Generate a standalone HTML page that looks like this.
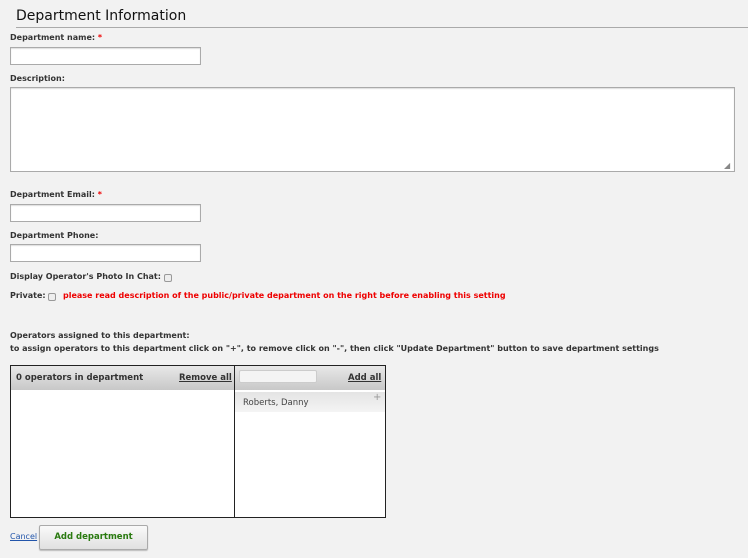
<!DOCTYPE html>
<html><head><style>
body{margin:0;width:748px;height:558px;background:#f2f2f2;font-family:"DejaVu Sans","Liberation Sans",sans-serif;position:relative;overflow:hidden;color:#333}
.a{position:absolute;white-space:nowrap}
.l{font-size:8px;font-weight:bold;color:#333}
.r{color:#e00}
.in{position:absolute;background:#fff;border:1px solid #aaa;box-shadow:inset 0 1px 1px #ddd;box-sizing:border-box}
.cb{position:absolute;width:8px;height:8px;border:1px solid #999;border-radius:2px;background:#eee;box-sizing:border-box}
</style></head><body>
<div class="a" style="left:16px;top:8px;font-size:14px;color:#111">Department Information</div>
<div class="a" style="left:16px;top:27px;width:732px;height:1px;background:#aaa"></div>
<div class="a l" style="left:10px;top:33px">Department name: <span class="r">*</span></div>
<div class="in" style="left:10px;top:47px;width:191px;height:18px"></div>
<div class="a l" style="left:10px;top:74px">Description:</div>
<div class="in" style="left:10px;top:87px;width:725px;height:85px"></div>
<div class="a" style="left:724px;top:161px;font-size:8px;color:#888">◢</div>
<div class="a l" style="left:10px;top:190px">Department Email: <span class="r">*</span></div>
<div class="in" style="left:10px;top:204px;width:191px;height:18px"></div>
<div class="a l" style="left:10px;top:231px">Department Phone:</div>
<div class="in" style="left:10px;top:244px;width:191px;height:18px"></div>
<div class="a l" style="left:10px;top:272px">Display Operator's Photo In Chat:</div>
<div class="cb" style="left:164px;top:274px"></div>
<div class="a l" style="left:10px;top:291px">Private:</div>
<div class="cb" style="left:48px;top:293px"></div>
<div class="a l r" style="left:63px;top:291px">please read description of the public/private department on the right before enabling this setting</div>
<div class="a l" style="left:10px;top:331px">Operators assigned to this department:</div>
<div class="a l" style="left:10px;top:344px">to assign operators to this department click on "+", to remove click on "-", then click "Update Department" button to save department settings</div>
<div class="a" style="left:10px;top:365px;width:376px;height:153px;border:1px solid #222;box-sizing:border-box;background:#fff"></div>
<div class="a" style="left:11px;top:366px;width:374px;height:24px;background:linear-gradient(#e8e8e8,#c8c8c8)"></div>
<div class="a" style="left:234px;top:366px;width:1px;height:151px;background:#222"></div>
<div class="a l" style="left:16px;top:373px;font-size:8.5px">0 operators in department</div>
<div class="a l" style="left:179px;top:373px;font-size:8.5px;text-decoration:underline">Remove all</div>
<div class="a" style="left:239px;top:370px;width:78px;height:13px;background:#f4f4f4;border:1px solid #ccc;border-radius:2px;box-sizing:border-box"></div>
<div class="a l" style="left:348px;top:373px;font-size:8.5px;text-decoration:underline">Add all</div>
<div class="a" style="left:235px;top:392px;width:150px;height:20px;background:linear-gradient(#e4e4e4,#f4f4f4)"></div>
<div class="a" style="left:243px;top:398px;font-size:8.5px;color:#444">Roberts, Danny</div>
<div class="a" style="left:373px;top:392px;font-size:10px;color:#999">+</div>
<div class="a" style="left:10px;top:532px;font-size:8px;color:#2255aa;text-decoration:underline">Cancel</div>
<div class="a" style="left:39px;top:525px;width:109px;height:25px;border:1px solid #aaa;border-radius:2px;box-sizing:border-box;background:linear-gradient(#fafafa,#e0e0e0);box-shadow:0 1px 1px #bbb;text-align:center;line-height:23px;font-size:8.5px;font-weight:bold;color:#2a7a10">Add department</div>
</body></html>
